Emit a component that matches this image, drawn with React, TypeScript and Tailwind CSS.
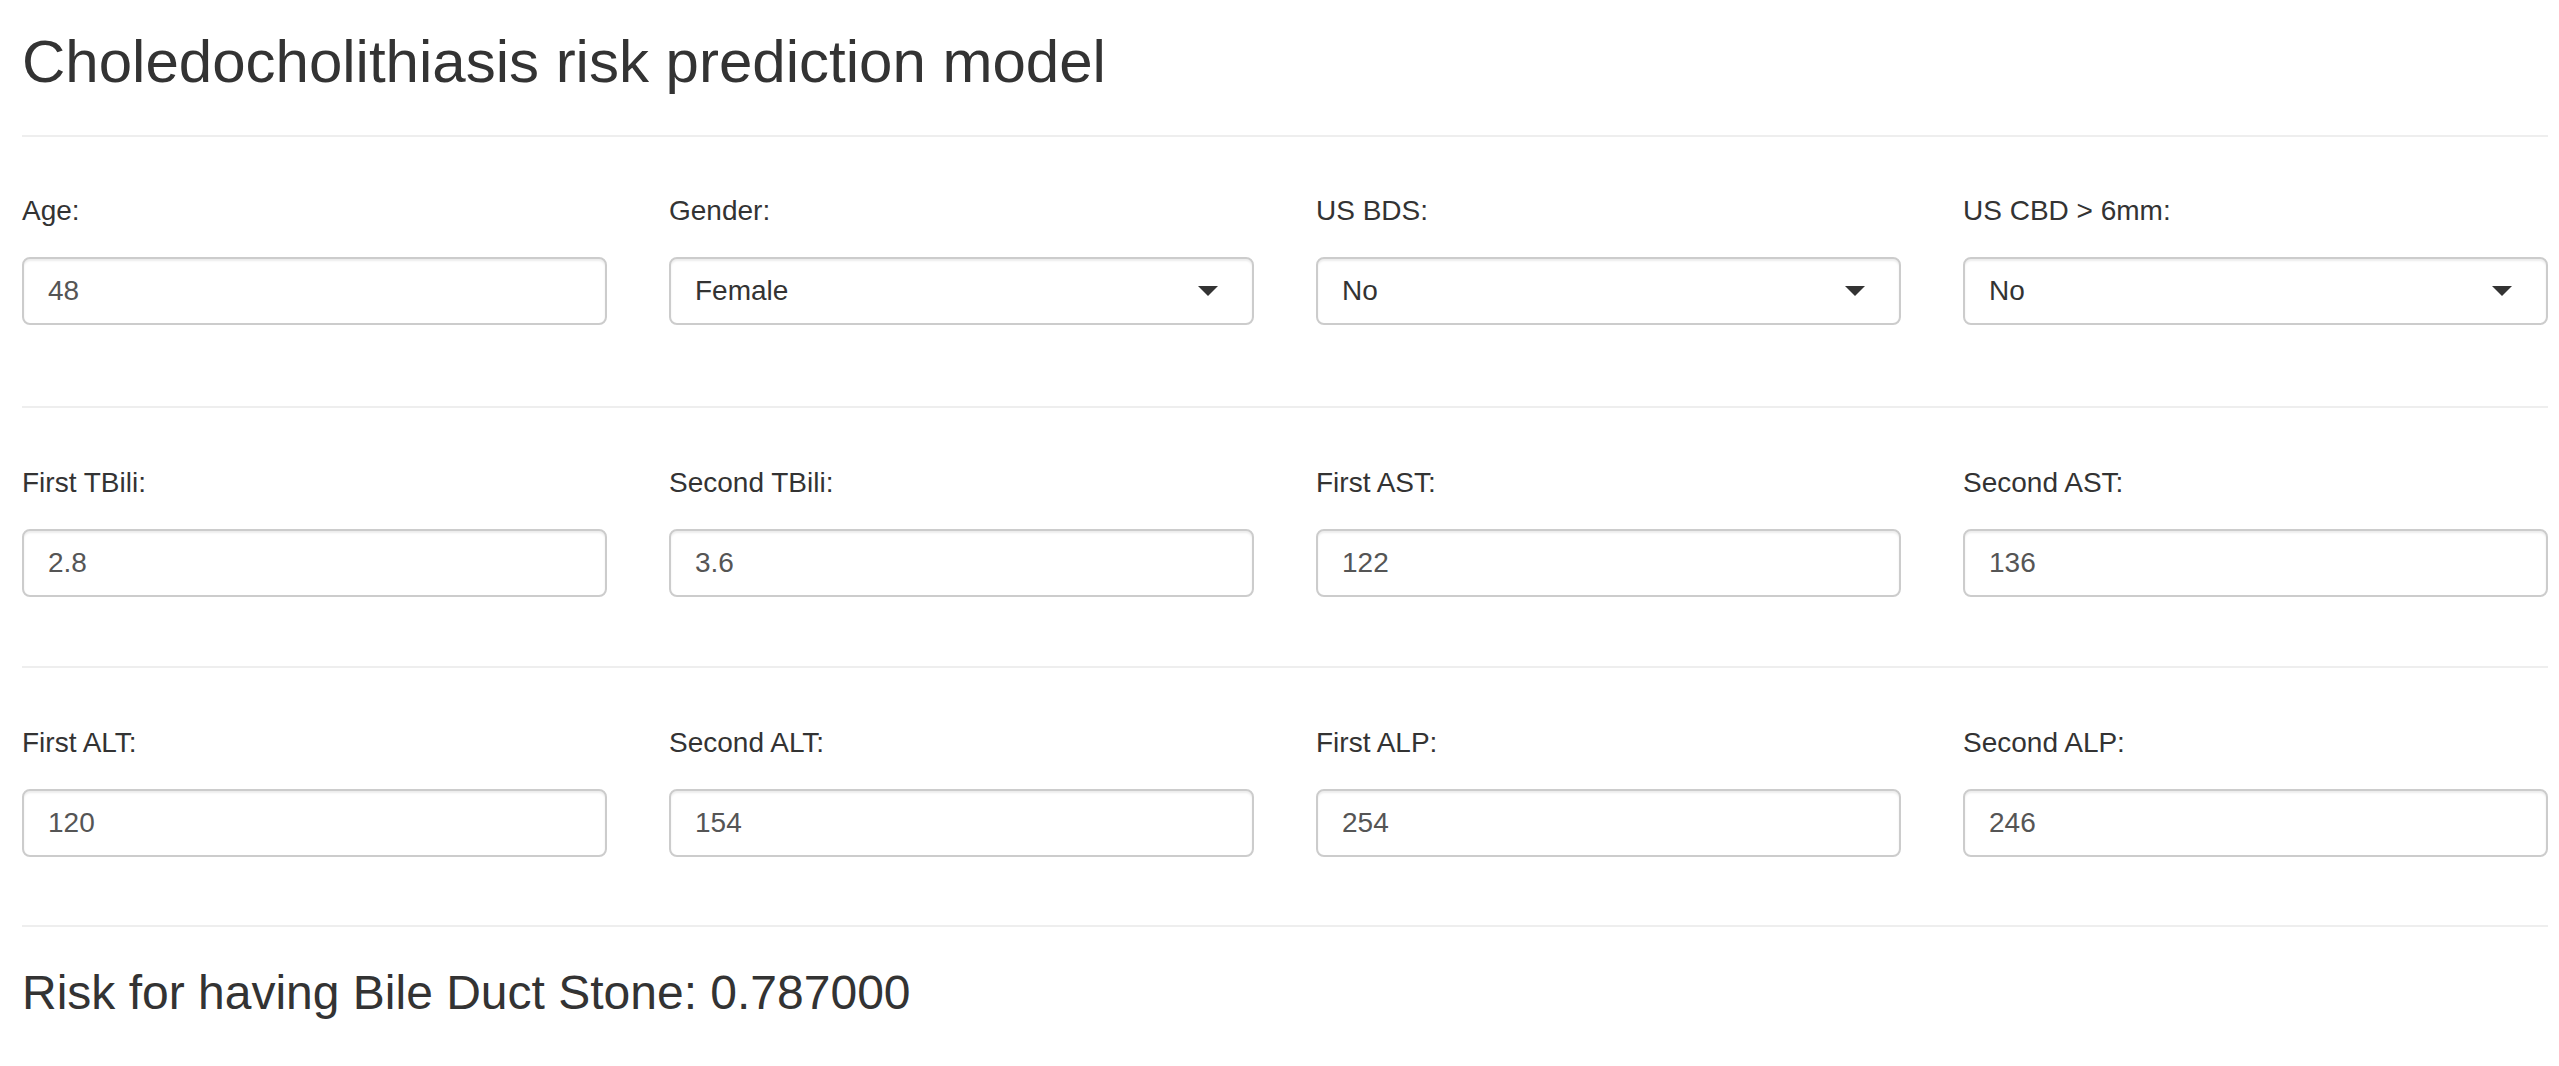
type Field = { label: string; value: string; select?: boolean };

const rows: { fields: Field[]; top: string; gap: string }[] = [
  {
    top: 'pt-[54px]',
    gap: 'mt-[81px]',
    fields: [
      { label: 'Age:', value: '48' },
      { label: 'Gender:', value: 'Female', select: true },
      { label: 'US BDS:', value: 'No', select: true },
      { label: 'US CBD > 6mm:', value: 'No', select: true },
    ],
  },
  {
    top: 'pt-[55px]',
    gap: 'mt-[69px]',
    fields: [
      { label: 'First TBili:', value: '2.8' },
      { label: 'Second TBili:', value: '3.6' },
      { label: 'First AST:', value: '122' },
      { label: 'Second AST:', value: '136' },
    ],
  },
  {
    top: 'pt-[55px]',
    gap: 'mt-[68px]',
    fields: [
      { label: 'First ALT:', value: '120' },
      { label: 'Second ALT:', value: '154' },
      { label: 'First ALP:', value: '254' },
      { label: 'Second ALP:', value: '246' },
    ],
  },
];

export default function App() {
  return (
    <div className="min-h-screen bg-white pl-[22px] pr-[11px] font-['Liberation_Sans',Arial,sans-serif] text-[#333]">
      <h2 className="pt-[29px] text-[60px] leading-[66px] font-normal">Choledocholithiasis risk prediction model</h2>
      <hr className="mt-[40px] border-t-2 border-[#eee]" />

      {rows.map((row, i) => (
        <div key={i}>
          <div className={`${row.top} grid grid-cols-4 gap-x-[62px]`}>
            {row.fields.map((f) => (
              <FormField key={f.label} field={f} />
            ))}
          </div>
          <hr className={`${row.gap} border-t-2 border-[#eee]`} />
        </div>
      ))}

      {/* Result */}
      <h3 className="mt-[39px] text-[48px] leading-[53px] font-normal">Risk for having Bile Duct Stone: 0.787000</h3>
    </div>
  );
}

function FormField({ field }: { field: Field }) {
  return (
    <div>
      <label className="block text-[28px] leading-[40px]">{field.label}</label>
      <div className="mt-[26px] h-[68px] rounded-[8px] border-2 border-[#ccc] bg-white shadow-[inset_0_2px_2px_rgba(0,0,0,0.075)] flex items-center pl-[24px] pr-[34px]">
        <span className={`flex-1 text-[28px] leading-[40px] ${field.select ? 'text-[#333]' : 'text-[#555]'}`}>{field.value}</span>
        {field.select && (
          <span className="w-0 h-0 border-x-[10px] border-x-transparent border-t-[10px] border-t-[#333]" />
        )}
      </div>
    </div>
  );
}
